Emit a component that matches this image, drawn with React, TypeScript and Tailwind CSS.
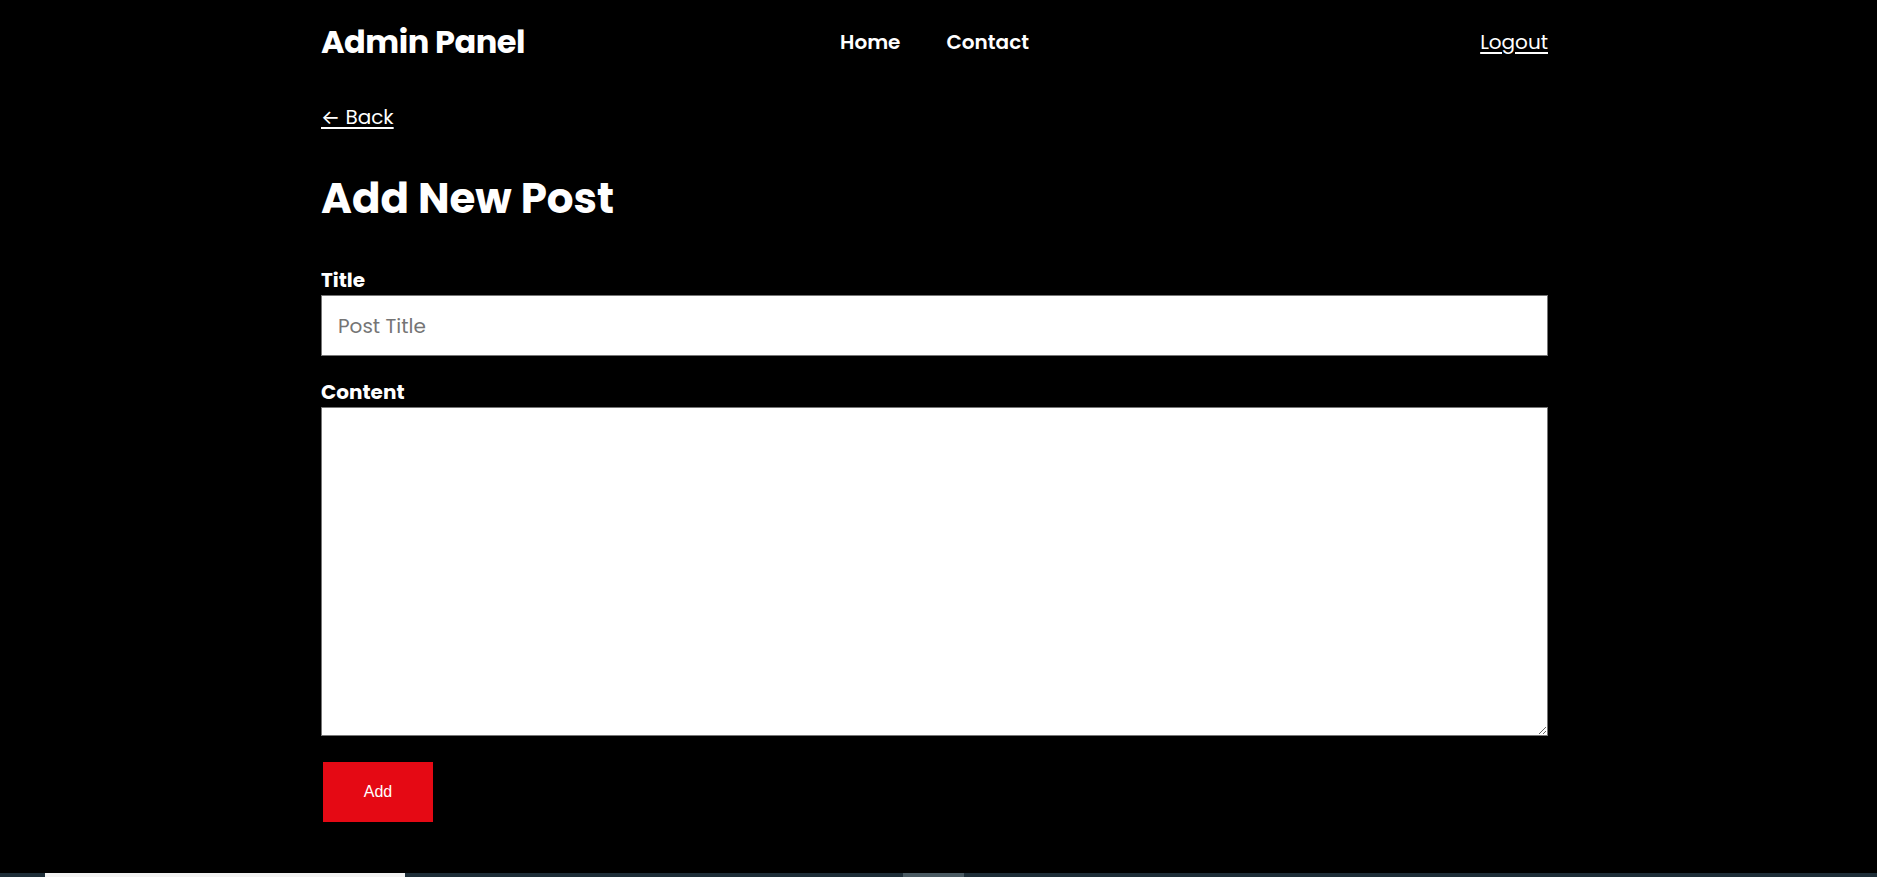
const font = "font-['Poppins','Inter',sans-serif]";

function Header() {
  return (
    <header className="grid h-[84px] grid-cols-3 items-center">
      <h2 className="text-[32px] font-bold tracking-[-0.5px] text-white">Admin Panel</h2>
      <nav className="flex justify-center gap-[46px] text-[20px] font-semibold text-white">
        <a href="#">Home</a>
        <a href="#">Contact</a>
      </nav>
      <div className="flex justify-end">
        <a href="#" className="text-[20px] text-white underline underline-offset-[3px]">
          Logout
        </a>
      </div>
    </header>
  );
}

export default function App() {
  return (
    <div className={`flex min-h-[877px] flex-col bg-black ${font}`}>
      <div className="ml-[321px] w-[1227px]">
        <Header />

        <a
          href="#"
          className="mt-[18px] block w-fit text-[20px] leading-[30px] text-white underline underline-offset-[3px]"
        >
          ← Back
        </a>

        <h1 className="mt-[42px] text-[42px] font-bold leading-[50px] text-white">
          Add New Post
        </h1>

        <form className="flex flex-col">
          <label className="mt-[44px] text-[20px] font-bold leading-[24px] text-white">Title</label>
          <input
            type="text"
            placeholder="Post Title"
            className="mt-[3px] h-[61px] w-full border border-[#767676] bg-white px-[16px] text-[20px] text-black outline-none placeholder:text-[#757575]"
          />

          <label className="mt-[24px] text-[20px] font-bold leading-[24px] text-white">Content</label>
          <textarea className="mt-[3px] h-[329px] w-full border border-[#767676] bg-white p-[16px] text-[20px] text-black outline-none" />

          <button
            type="button"
            className="ml-[2px] mt-[26px] h-[60px] w-[110px] bg-[#e50914] font-['Liberation_Sans',Arial,sans-serif] text-[16px] text-white"
          >
            Add
          </button>
        </form>
      </div>

      {/* bottom edge of the next section peeking in */}
      <div className="mt-auto flex h-[4px] bg-[#1e2e38]">
        <div className="ml-[45px] w-[360px] bg-[#f2f2f2]" />
        <div className="ml-[498px] w-[61px] bg-[#4a5a62]" />
      </div>
    </div>
  );
}
